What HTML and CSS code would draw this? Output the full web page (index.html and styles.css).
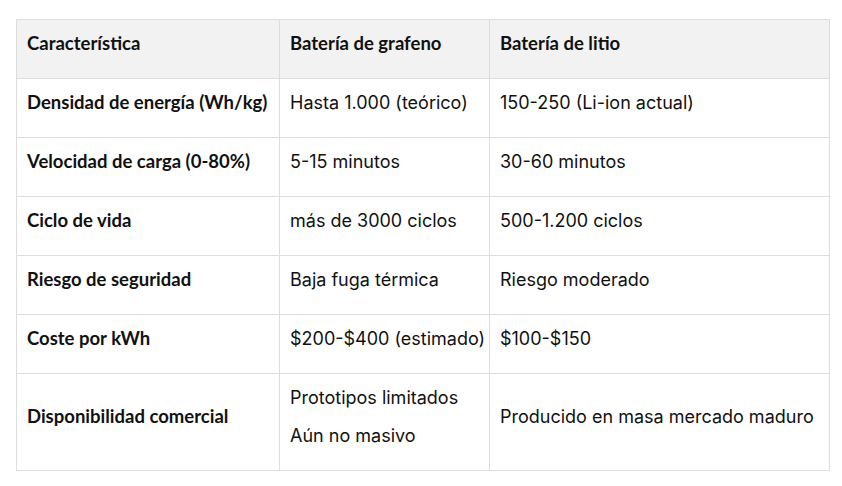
FILE: index.html
```html
<!DOCTYPE html>
<html lang="es">
<head>
<meta charset="utf-8">
<link rel="stylesheet" href="styles.css">
</head>
<body>
<table class="cmp">
  <colgroup>
    <col class="c1"><col class="c2"><col class="c3">
  </colgroup>
  <thead>
    <tr>
      <th><p>Característica</p></th>
      <th><p>Batería de grafeno</p></th>
      <th><p>Batería de litio</p></th>
    </tr>
  </thead>
  <tbody>
    <tr>
      <th><p>Densidad de energía (Wh/kg)</p></th>
      <td><p>Hasta 1.000 (teórico)</p></td>
      <td><p>150-250 (Li-ion actual)</p></td>
    </tr>
    <tr>
      <th><p>Velocidad de carga (0-80%)</p></th>
      <td><p>5-15 minutos</p></td>
      <td><p>30-60 minutos</p></td>
    </tr>
    <tr>
      <th><p>Ciclo de vida</p></th>
      <td><p>más de 3000 ciclos</p></td>
      <td><p>500-1.200 ciclos</p></td>
    </tr>
    <tr>
      <th><p>Riesgo de seguridad</p></th>
      <td><p>Baja fuga térmica</p></td>
      <td><p>Riesgo moderado</p></td>
    </tr>
    <tr>
      <th><p>Coste por kWh</p></th>
      <td><p>$200-$400 (estimado)</p></td>
      <td><p>$100-$150</p></td>
    </tr>
    <tr>
      <th><p>Disponibilidad comercial</p></th>
      <td><p>Prototipos limitados</p><p>Aún no masivo</p></td>
      <td><p>Producido en masa mercado maduro</p></td>
    </tr>
  </tbody>
</table>
</body>
</html>
```

FILE: styles.css
```css
html, body {
  margin: 0;
  background: #ffffff;
}
body {
  padding: 19px 16px;
}
.cmp {
  border-collapse: collapse;
  table-layout: fixed;
  width: 813px;
  color: #111111;
}
.c1 { width: 263px; }
.c2 { width: 210px; }
.c3 { width: 340px; }
.cmp th, .cmp td {
  border: 1px solid #dddddd;
  padding: 10px 10px;
  vertical-align: middle;
  text-align: left;
}
.cmp th {
  font-family: "Lato", "Liberation Sans", sans-serif;
  font-weight: 700;
  font-size: 18.5px;
}
.cmp td {
  font-family: "Inter", "Liberation Sans", Arial, sans-serif;
  font-weight: 400;
  font-size: 18px;
}
.cmp thead th {
  background: #f2f2f2;
}
.cmp p {
  margin: 0 0 11px 0;
  line-height: 27px;
  white-space: nowrap;
}
```
